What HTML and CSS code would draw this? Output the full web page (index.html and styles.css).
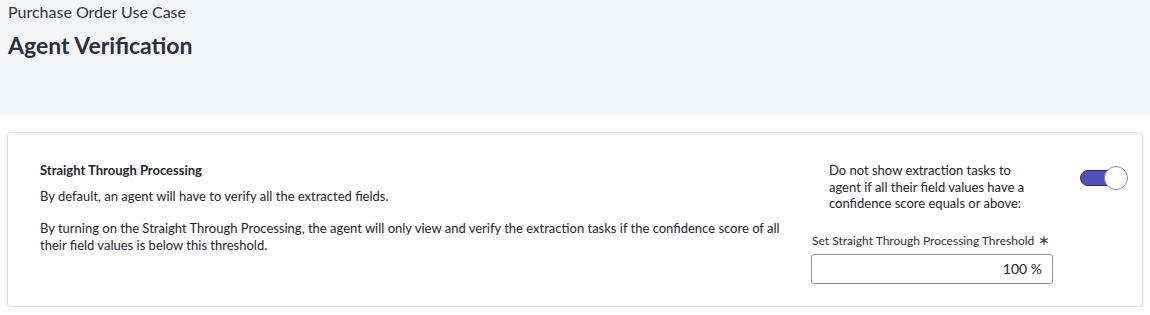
FILE: index.html
```html
<!DOCTYPE html>
<html>
<head>
<meta charset="utf-8">
<link rel="stylesheet" href="styles.css">
</head>
<body>
<header class="page-header">
  <div class="crumb">Purchase Order Use Case</div>
  <h1 class="title">Agent Verification</h1>
</header>
<section class="card">
  <div class="info">
    <h2 class="info-title">Straight Through Processing</h2>
    <p class="info-text">By default, an agent will have to verify all the extracted fields.</p>
    <p class="info-text">By turning on the Straight Through Processing, the agent will only view and verify the extraction tasks if the confidence score of all their field values is below this threshold.</p>
  </div>
  <div class="settings">
    <p class="settings-text">Do not show extraction tasks to agent if all their field values have a confidence score equals or above:</p>
    <label class="field-label">Set Straight Through Processing Threshold <span class="req">&#x2217;</span></label>
    <div class="input">100 %</div>
  </div>
  <div class="toggle-col">
    <div class="toggle"><span class="knob"></span></div>
  </div>
</section>
</body>
</html>
```
FILE: styles.css
```css
html, body {
  margin: 0;
  padding: 0;
  background: #ffffff;
  font-family: Lato, "Liberation Sans", sans-serif;
  color: #1f2430;
}

.page-header {
  background: #f4f5f7;
  height: 115px;
  padding: 2px 8px 0;
  box-sizing: border-box;
}

.crumb {
  font-size: 16px;
  line-height: 19px;
  color: #2d3341;
}

.title {
  margin: 11px 0 0;
  font-size: 23px;
  line-height: 27px;
  font-weight: 700;
  color: #2a303d;
}

.card {
  margin: 17px 7px 0;
  height: 175px;
  box-sizing: border-box;
  border: 1px solid #dcdee3;
  border-radius: 4px;
  box-shadow: 0 2px 3px rgba(0, 0, 0, 0.12);
  display: flex;
  padding: 29px 14px 0 32px;
}

.info {
  width: 750px;
  flex: none;
}

.info-title {
  margin: 0;
  font-size: 13px;
  line-height: 16px;
  font-weight: 700;
  color: #1f2430;
}

.info-text {
  margin: 10px 0 0;
  font-size: 13px;
  line-height: 17px;
}

.info-title + .info-text {
  margin-top: 10px;
}

.info-text + .info-text {
  margin-top: 15px;
}

.settings {
  margin-left: 21px;
  width: 242px;
  flex: none;
  display: flex;
  flex-direction: column;
}

.settings-text {
  margin: 0 0 0 18px;
  width: 205px;
  font-size: 13px;
  line-height: 16.5px;
  color: #1f2430;
}

.field-label {
  margin-top: 21px;
  margin-left: 1px;
  font-size: 12px;
  line-height: 15px;
  color: #2a303d;
}

.req {
  font-size: 14px;
  line-height: 12px;
  margin-left: 1px;
  font-weight: 300;
  color: #3a404c;
}

.input {
  margin-top: 6px;
  height: 30px;
  box-sizing: border-box;
  border: 1px solid #8e929b;
  border-radius: 3px;
  font-size: 14px;
  line-height: 28px;
  text-align: right;
  padding-right: 10px;
  color: #1f2430;
}

.toggle-col {
  margin-left: 27px;
  padding-top: 4px;
}

.toggle {
  position: relative;
  width: 48px;
  height: 24px;
  display: flex;
  align-items: center;
}

.toggle::before {
  content: "";
  display: block;
  width: 38px;
  height: 16px;
  box-sizing: border-box;
  border-radius: 8px;
  background: #4f50ba;
  border: 1px solid #2c2d6e;
}

.knob {
  position: absolute;
  right: 0;
  top: 0;
  width: 24px;
  height: 24px;
  box-sizing: border-box;
  border-radius: 50%;
  background: #ffffff;
  border: 1px solid #8a8fa0;
}
```
